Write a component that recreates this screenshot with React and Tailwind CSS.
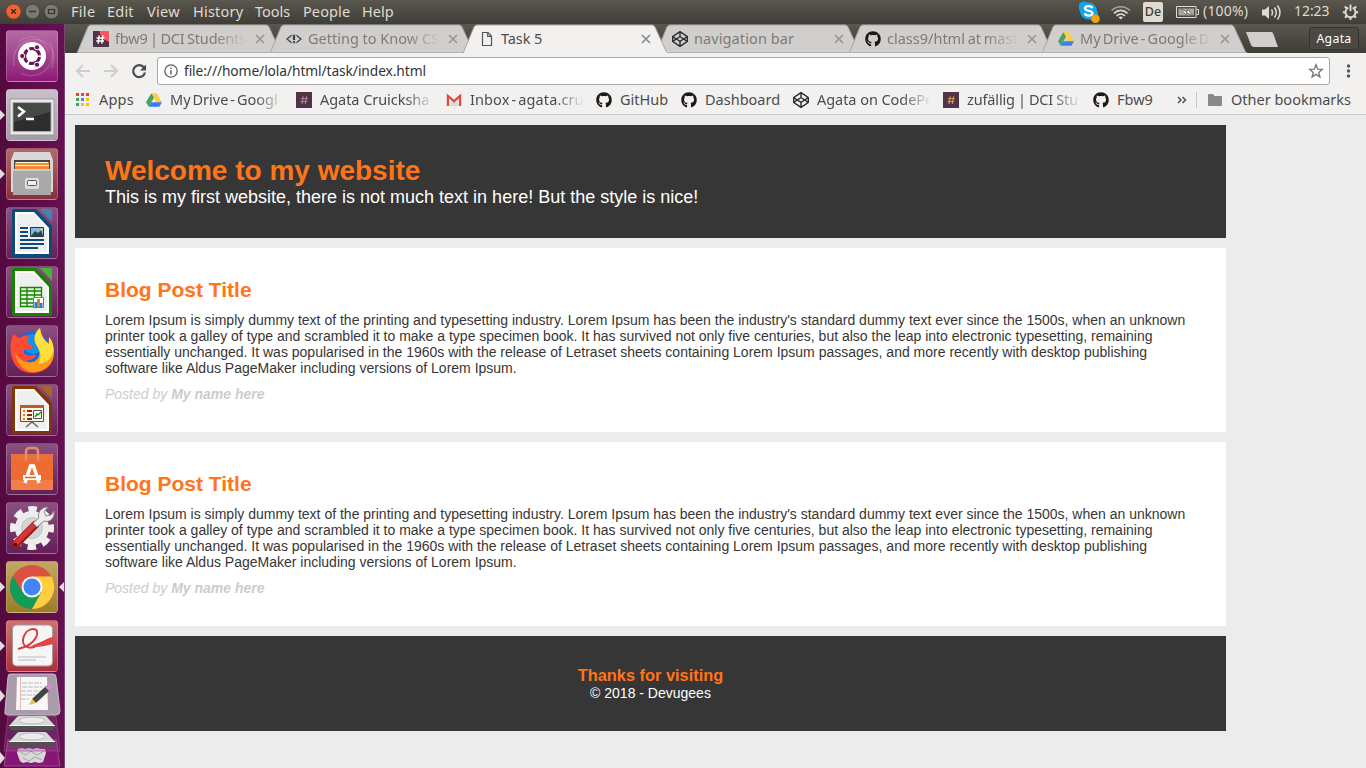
import React from "react";
import { FaGithub, FaCodepen } from "react-icons/fa";

const ui = "font-['Noto_Sans','Open_Sans',sans-serif] whitespace-nowrap";

/* ---------- favicons ---------- */
function Drive() {
  return (
    <svg width="16" height="16" viewBox="0 0 16 16" className="shrink-0">
      <path d="M5.3 1.2h5.4L16 10.3h-5.4z" fill="#ffcd40" />
      <path d="M5.3 1.2 0 10.3l2.7 4.5L8 5.8z" fill="#4aa35a" />
      <path d="M5.3 10.3H16l-2.7 4.5H2.7z" fill="#3c7df0" />
    </svg>
  );
}
function Hash({ gold }) {
  return (
    <svg width="16" height="16" viewBox="0 0 16 16" className="shrink-0">
      <path d="M0 0h16v16H0z" fill="#4f3448" />
      <path d="M7.3 4.2 6 12M10.6 4.2 9.3 12M4.9 6.7h7M4.3 9.6h7" stroke={gold ? "#d9a441" : "#a48b9e"} strokeWidth="1" fill="none" />
    </svg>
  );
}
function HashRed() {
  return (
    <svg width="16" height="16" viewBox="0 0 16 16" className="shrink-0">
      <path d="M0 0h16v16H0z" fill="#4f3448" />
      <path d="M6.5 0H16v10.5C11 10 7 5 6.5 0z" fill="#ff5560" />
      <path d="M6.2 4.4 5.2 12.6M9.8 4.4 8.8 12.6M3.6 7h7.8M3.2 10h7.8" stroke="#fff" strokeWidth="1.4" fill="none" />
    </svg>
  );
}
function Eye() {
  return (
    <svg width="16" height="16" viewBox="0 0 16 16" className="shrink-0" fill="none" stroke="#3b4045">
      <path d="M5.5 4.3 1 8l4.500 3.700M10.500 4.300 15 8l-4.500 3.700" strokeWidth="1.200" />
      <path d="M5.500 4.300Q8 2.800 10.500 4.300M5.500 11.700Q8 13.200 10.500 11.700" strokeWidth=".9" strokeOpacity=".35" />
      <path d="M8 4v5" strokeWidth="2.200" />
      <path d="M8 10v1.800" strokeWidth="2" />
    </svg>
  );
}
function Page() {
  return (
    <svg width="16" height="16" viewBox="0 0 16 16" className="shrink-0" fill="none" stroke="#555" strokeWidth="1.200">
      <path d="M3.500 1.500h5.500l3.500 3.500v9.500h-9zM8.700 1.500v3.800h3.800" />
    </svg>
  );
}
function Gmail() {
  return (
    <svg width="16" height="16" viewBox="0 0 16 16" className="shrink-0">
      <path d="M1 2.500h14V14H1z" fill="#f4f0ee" />
      <path d="m2 14 4-5 2 1.500L10 9l4 5z" fill="#dcd8d6" />
      <path d="M1.900 14V4L8 9.200 14.100 4v10" fill="none" stroke="#dd4b3e" strokeWidth="2.200" />
    </svg>
  );
}
const Github = () => <FaGithub size={16} color="#1b1817" className="shrink-0" />;
const Codepen = () => <FaCodepen size={16} color="#2b2b2b" className="shrink-0" />;
function AppsGrid() {
  const c = ["#ea4335", "#ea4335", "#ea4335", "#34a853", "#4285f4", "#fbbc05", "#34a853", "#fbbc05", "#fbbc05"];
  return (
    <svg width="13" height="16" viewBox="0 0 13 16" className="shrink-0">
      {c.map((f, i) => <rect key={i} x={(i % 3) * 5} y={1 + Math.floor(i / 3) * 5} width="3" height="3" fill={f} />)}
    </svg>
  );
}

/* ---------- top panel ---------- */
function MenuBar() {
  const items = [["File", "w-[36px] tracking-[0.300px]"], ["Edit", "w-[40px] tracking-[0.200px]"], ["View", "w-[46px] tracking-[0.300px]"], ["History", "w-[62px] tracking-[0.200px]"], ["Tools", "w-[48px]"], ["People", "w-[59px] tracking-[0.100px]"], ["Help", "w-[40px]"]];
  return (
    <div className={`flex h-6 items-center bg-linear-to-b from-[#5a574e] to-[#3e3d38] text-[#dfdbd2] ${ui}`}>
      <svg width="71" height="24" viewBox="0 0 71 24" className="shrink-0">
        <circle cx="13.500" cy="11.500" r="7.500" fill="#ee6233" stroke="#8f3b1c" strokeWidth=".8" />
        <path d="m11.200 9.200 4.600 4.600m0-4.600-4.600 4.600" stroke="#4a2013" strokeWidth="1.300" />
        <circle cx="32.500" cy="11.500" r="7.400" fill="#7a786f" stroke="#393833" strokeWidth=".8" />
        <path d="M29 11.500h7" stroke="#33322e" strokeWidth="1.300" />
        <circle cx="51.500" cy="11.500" r="7.400" fill="#7a786f" stroke="#393833" strokeWidth=".8" />
        <path d="M48.500 9.500h6v4h-6z" fill="none" stroke="#33322e" strokeWidth="1.200" />
      </svg>
      <div className="flex grow pb-[2px] text-[14.500px] leading-[22px]">
        {items.map(([t, c]) => <span key={t} className={c}>{t}</span>)}
      </div>
      <svg width="65" height="24" viewBox="1 0 65 24" className="shrink-0">
        <circle cx="6" cy="7" r="5.500" fill="#12a5e8" />
        <circle cx="14" cy="14" r="6" fill="#12a5e8" />
        <circle cx="10.500" cy="11" r="8.500" fill="#12a5e8" />
        <path d="M14.300 8.300c-.7-2.700-7.300-3.200-7.300 0 0 3.500 7.500 1.800 7.500 5 0 3.200-7 3-7.700 0" fill="none" stroke="#fff" strokeWidth="2.400" />
        <circle cx="17.500" cy="18.800" r="4.300" fill="#f5a110" />
        <g fill="none" stroke="#dfdbd2" strokeWidth="1.700">
          <path d="M33.600 10.500c5.300-5 13-5 18.300 0" opacity=".6" />
          <path d="M36 13.400c4-4 9.500-4 13.500 0" />
          <path d="M38.600 16c2.400-2.400 6-2.400 8.400 0" />
        </g>
        <path d="m40.500 17.200 2.300 2.300 2.300-2.300q-2.300-1.500-4.600 0z" fill="#dfdbd2" />
      </svg>
      <span className="-ml-px flex h-5 w-5 items-center justify-center rounded-xs bg-[#dfdbd2] text-[12.500px] font-medium text-[#3c3b37]">De</span>
      <svg width="25" height="24" viewBox="0 0 25 24" className="ml-3 shrink-0">
        <path d="M1.500 6.500h19.500v11H1.500zM21.500 9.500h2v5h-2" fill="none" stroke="#dfdbd2" />
        <path d="M3.500 8.500h15.500v7H3.500z" fill="#aaa79f" />
        <path d="m5.500 8.500 6.500 3.500.5-2.700 5.500 6.200-6.500-3-.5 2.400z" fill="#fff" stroke="#4d4b45" strokeWidth=".7" />
      </svg>
      <span className="ml-[3px] w-[58px] pb-[2px] text-[14px] leading-[22px] tracking-[0.200px]">(100%)</span>
      <svg width="22" height="24" viewBox="0 0 22 24" className="shrink-0">
        <path d="M1 9.500h3L8 6v13l-4-3.500H1z" fill="#dfdbd2" />
        <path d="M10.500 9.500q2 3 0 6M13.500 7.500q3.500 5 0 10M16.500 5.500q5 7 0 14" fill="none" stroke="#dfdbd2" strokeWidth="1.500" />
      </svg>
      <span className="ml-[11px] w-[48px] pb-[2px] text-[13.900px] leading-[22px]">12:23</span>
      <svg width="17" height="24" viewBox="0 0 17 24" className="mr-[7px] shrink-0" fill="none" stroke="#dfdbd2">
        <path d="M6.300 7.700a5 5 0 1 0 4.400 0" strokeWidth="1.900" />
        <path d="M8.500 4.500v6.500" strokeWidth="1.900" />
        <path d="m4.600 8.200-1.800-1.800M12.400 8.200l1.800-1.800M3.500 12.200H.8M13.500 12.200h2.700M5 15.800l-2 2M12 15.800l2 2M8.500 17v3" strokeWidth="2" />
      </svg>
    </div>
  );
}

/* ---------- launcher ---------- */
function Doc({ c, l }) {
  return (
    <g>
      <path d="M8 2h22l16 17v29q0 2-2 2H8q-2 0-2-2V4q0-2 2-2z" fill={c} />
      <path d="M9 5h19l15 16v26H9z" fill="#fff" />
      <path d="M11 7h16l14 15v23H11z" fill="#efefef" />
      <path d="M34 2h10q2 0 2 2v11z" fill={l} />
    </g>
  );
}
const arts = {
  ubuntu: (
    <g>
      <path d="M8 36C5 15 22 5 39 12q12 8 7 26" fill="none" stroke="#e0a5d2" strokeOpacity=".3" strokeWidth="1.500" />
      <path d="M44 12C55 33 33 53 15 43M13 12q18-14 30 10" fill="none" stroke="#e0a5d2" strokeOpacity=".25" strokeWidth="1.500" />
      <circle cx="26" cy="26" r="14" fill="#fff" />
      <circle cx="26" cy="26" r="7.500" fill="none" stroke="#6a1455" strokeWidth="3.200" strokeDasharray="13.700 2" strokeDashoffset="-1" />
      <circle cx="16.200" cy="26" r="2.600" fill="#6a1455" stroke="#fff" />
      <circle cx="31" cy="17.300" r="2.600" fill="#6a1455" stroke="#fff" />
      <circle cx="31" cy="34.700" r="2.600" fill="#6a1455" stroke="#fff" />
    </g>
  ),
  term: (
    <g>
      <path d="M4 10h44v36H4z" fill="#e9e9e9" stroke="#999" />
      <path d="M7 13.500h38v29H7z" fill="#2c2e2c" stroke="#aaa" />
      <path d="M8 14h36v9L8 33z" fill="#454845" />
      <path d="m12 18 6 4.500-6 5M20 30h8" fill="none" stroke="#fff" strokeWidth="2.500" />
    </g>
  ),
  files: (
    <g>
      <path d="M8 4h36l3 8v32H5V12z" fill="#d8d8d8" />
      <path d="M8 12h36v10H8z" fill="#444" />
      <path d="M9 14h34v8H9z" fill="#ef8b3d" />
      <path d="M9 17.500h34M10 14.500h32" stroke="#fff0d0" />
      <path d="M7 21h38v26H7z" fill="#a9a9a9" />
      <path d="M7 22h38" stroke="#ccc" strokeWidth="2" />
      <rect x="19" y="30" width="14" height="11" rx="2" fill="#ddd" />
      <rect x="21.500" y="32.500" width="9" height="5" rx="1" fill="#eee" stroke="#555" />
    </g>
  ),
  writer: (
    <g>
      <Doc c="#0c4b78" l="#3f86b5" />
      <path d="M14 21h8M14 25h8M14 29h8M14 33h24M14 37h24M14 41h18" stroke="#0c4b78" strokeWidth="2" />
      <path d="M24.500 20.500h13v9h-13z" fill="#80bce8" stroke="#113b5a" />
      <path d="m25 29 4-5 3 2 3-3 2 6z" fill="#384238" /><circle cx="35.500" cy="22.500" r="1.200" fill="#f2d13c" />
    </g>
  ),
  calc: (
    <g>
      <Doc c="#188303" l="#4bb13a" />
      <path d="M14 21h22v20H14z" fill="#e2f7dc" />
      <path d="M14.500 21.500h21v19h-21zM14 25h22M14 29h22M14 33h22M14 37h22M21 21v20M28.500 21v20" fill="none" stroke="#188303" strokeWidth="1.300" />
      <path d="M27.500 31.500h10v10h-10z" fill="#fff" stroke="#777" />
      <path d="M28.500 36h2.500v5h-2.500z" fill="#1784d8" /><path d="M31 33h3v8h-3z" fill="#e57a22" /><path d="M34 37h2.500v4H34z" fill="#1784d8" />
    </g>
  ),
  firefox: (
    <g>
      <circle cx="26" cy="25" r="18" fill="#1568e0" />
      <circle cx="27" cy="19" r="10" fill="#11b0f2" fillOpacity=".6" />
      <path d="M8 9C4 16 4 21 5 29c2 12 10 19 21 19 14 0 22-9 22-21 0-5-2-10-5-14l-3 20c-6 8-15 8-20 2 4 1 7-1 10-4-2-3-5 1-9-1-3-1-4-3-3-5 2-1 6 1 9-3-1-3-6-2-6-6 0-2 1-3 2-5-4-1-7 0-9 2-3-1-4-2-6-4z" fill="#ff4a35" />
      <path d="M34 3c-6 5-7 12-3 18 7 11-2 20-14 15-4-2-6-5-8-9 1 12 10 21 20 20 12-1 19-10 19-20 0-6-2-12-5-15v7c-5-4-8-8-9-16z" fill="#ff9a1b" />
      <path d="M34 3c-6 5-7 12-3 18 4 6 5 12 1 18 15-1 20-16 11-27v7c-5-4-8-8-9-16z" fill="#ffe03c" />
    </g>
  ),
  impress: (
    <g>
      <Doc c="#813704" l="#a9632f" />
      <path d="M14.500 21.500h23v16h-23z" fill="#fff3e8" stroke="#9a3c11" />
      <path d="M14 21h24v3H14z" fill="#c25a24" />
      <path d="M17 27h2M17 31h2M17 35h2" stroke="#e57a22" strokeWidth="2" />
      <path d="M21 27h5M21 31h5M21 35h5" stroke="#8b2e06" strokeWidth="2" />
      <path d="M27.500 26.500h8v8h-8z" fill="#fff" stroke="#555" /><path d="m29 33 2-3 1 1 3-3" stroke="#1b9c20" fill="none" strokeWidth="1.500" />
      <path d="m26 38-6 5m6-5 6 5" stroke="#666" strokeWidth="1.500" />
    </g>
  ),
  software: (
    <g>
      <path d="M5 11h42v36H5z" fill="#ee6c31" />
      <path d="M5 11h42v4H5z" fill="#e9713f" /><path d="M5 37h42v10H5z" fill="#f37d45" />
      <path d="M20 18V9q0-4 4-4h4q4 0 4 4v9" fill="none" stroke="#e58a6a" strokeWidth="2.500" />
      <path d="m19 40 5.500-17h3L33 40" fill="none" stroke="#fff" strokeWidth="3.500" />
      <path d="M17 34.500h18" stroke="#fff" strokeWidth="5" /><path d="M19 34.500h11" stroke="#e65a21" strokeWidth="1.500" />
    </g>
  ),
  settings: (
    <g>
      <circle cx="26" cy="26" r="19" fill="none" stroke="#efefef" strokeWidth="6" strokeDasharray="8.500 6.420" strokeDashoffset="4.250" />
      <circle cx="26" cy="26" r="13.500" fill="#e4e4e4" stroke="#ececec" strokeWidth="7" />
      <circle cx="26" cy="26" r="10.500" fill="#d4d4d4" stroke="#c4c4c4" />
      <path d="M10 42 29 23" stroke="#9d1818" strokeWidth="8" strokeLinecap="round" />
      <path d="M10 41 29 22" stroke="#d23835" strokeWidth="5" strokeLinecap="round" />
      <path d="m27 21 6-5c-2-5 2-11 9-11l-4 5 2 4 5-1 3-4c1 7-4 12-10 10l-7 6z" fill="#eee" stroke="#888" />
      <circle cx="9.500" cy="42.500" r="1.800" fill="#5a0d0d" />
    </g>
  ),
  chrome: (
    <g>
      <circle cx="26" cy="26" r="22" fill="#dd5144" />
      <path d="M7 15a22 22 0 0 0 19 33l9.500-17-9.500 5-9.500-5z" fill="#109d58" />
      <path d="M26 15.500h19.500A22 22 0 0 1 26 48l9.500-17z" fill="#ffcd40" />
      <circle cx="26" cy="26" r="10.500" fill="#f5f5f5" /><circle cx="26" cy="26" r="8.500" fill="#4285f4" />
    </g>
  ),
  reader: (
    <g>
      <rect x="6.500" y="5" width="40" height="41" rx="4" fill="#f6f6f6" stroke="#a59a9a" />
      <path d="M12 29C31 25 36 9 27 9 18 9 13 24 21 27c8 3 14-6 26-9" fill="none" stroke="#de3a3c" strokeWidth="2" />
      <path d="M25 26q10-5 22-7v5q-11 3-18 3z" fill="#e04547" />
      <path d="M12 37h28M12 40h18" stroke="#bbb" />
    </g>
  ),
};
const plum = "from-[#8a5080] to-[#641f57]";
const tiles = [
  ["ubuntu", "from-[#b46aa3] to-[#8d1776]", 0], ["term", "from-[#c9c0c9] to-[#a59aa5]", 1], ["files", "from-[#b0686a] to-[#8b2f3b]", 1],
  ["writer", plum, 0], ["calc", plum, 0], ["firefox", plum, 0],
  ["impress", plum, 0], ["software", plum, 0], ["settings", plum, 0],
  ["chrome", "from-[#c0a962] to-[#9c7c28]", 2], ["reader", "from-[#cf7070] to-[#ad2e3b]", 1],
];
function Disk({ y }) {
  return (
    <g transform={`translate(0 ${y})`}>
      <path d="m9 10 8-9q1-1 3-1h24q2 0 3 1l8 9v2H9z" fill="#d9d9d9" />
      <ellipse cx="32" cy="4.500" rx="13" ry="3.500" fill="#ececec" stroke="#bbb" />
      <path d="M9 9.500h46v2l-3 3H12l-3-3z" fill="#505050" />
      <path d="M9 9.500h46" stroke="#f4f4f4" />
    </g>
  );
}
function Launcher() {
  return (
    <div className="flex w-[65px] shrink-0 flex-col border-r border-[#7b4a72] bg-linear-to-r from-[#54093f] to-[#641152] pt-[6px]">
      {tiles.map(([k, c, m]) => (
        <div key={k} className="mb-[7px] flex h-[52px] shrink-0 items-center">
          <svg width="6" height="12" className="shrink-0">{m > 0 && <path d="M0 1v10l5-5z" fill="#e3dce2" />}</svg>
          <div className={`h-[52px] w-[52px] shrink-0 overflow-hidden rounded-[4px] border border-white/20 bg-linear-to-b ${c}`}>
            <svg width="50" height="50" viewBox="1 1 50 50">{arts[k]}</svg>
          </div>
          <svg width="6" height="12" className="shrink-0">{m === 2 && <path d="M6 1v10L1 6z" fill="#e3dce2" />}</svg>
        </div>
      ))}
      <svg width="64" height="96" viewBox="0 672 64 96" className="-mt-[7px] shrink-0">
        <path d="M8 740h48l4 26H4z" fill="#871776" stroke="#9e4a8e" />
        <path d="m18 749 4-1 3 1 4-1 4 1 4-1 4 1 4 0 1 4-3 9-4 1-4-1-4 1-4-1-4 1-3-2-3-8z" fill="#d8d8d8" />
        <path d="m20 752 6 3 5-4 6 4 7-4M23 758l6 3 6-4 7 3" stroke="#a5a5a5" fill="none" />
        <path d="M8 716h48l4 35H4z" fill="#96568a" fillOpacity=".3" stroke="#9e4a8e" strokeOpacity=".6" />
        <Disk y={732} />
        <Disk y={716} />
        <path d="M10 674h43q3 0 3 3l4 34q0 4-4 4H8q-4 0-3-4l3-34q0-3 2-3z" fill="#a99ba9" stroke="#c9bcc9" />
        <path d="M17 677h30l1 33H16z" fill="#f7f7f7" />
        <path d="M22 683h20M22 687h20M21 691h20M21 695h18M21 699h8" stroke="#bbb" strokeDasharray="5 1" />
        <path d="M20.500 677v33" stroke="#efb4b4" />
        <path d="m32 699 14-13 4 4-14 13z" fill="#444" /><path d="m45 687 4-4 4 4-4 4z" fill="#d78ac5" /><path d="m29 705 3-6 4 4z" fill="#e5c345" />
        <path d="M0 690v12l5-6zM0 752v12l5-6z" fill="#e3dce2" />
      </svg>
    </div>
  );
}

/* ---------- browser chrome ---------- */
function Tab({ icon, title, active, tw }) {
  const f = active ? "#f2f1f0" : "#d1cfcd";
  return (
    <div className={`relative -mr-[12px] flex h-[29px] w-[205px] shrink-0 items-center pl-[16px] ${active ? "z-10" : ""}`}>
      <svg width="205" height="29" className="absolute inset-0">
        <path d="M0 29 1 27 11 3q1-2 3-2h175q2 0 3 2l11 24 1 2z" fill={f} stroke="#aaa7a3" strokeWidth="1" />
        {active ? <path d="M1 28h203v1H1z" fill="#f2f1f0" /> : <path d="M0 28h205v1H0z" fill="#b3b1ae" />}
      </svg>
      <div className="relative flex items-center">
        {icon}
        <div className={`-mt-px ml-[6px] w-[132px] overflow-hidden text-[14.500px] leading-6 word-spacing-tight ${active ? "text-[#4c4c4c]" : "text-[#7d7b79]"} ${tw}`}>{title}</div>
        <svg width="10" height="10" className="ml-[8px]"><path d="m1 1 8 8m0-8-8 8" stroke={active ? "#888" : "#979593"} strokeWidth="1.600" /></svg>
      </div>
    </div>
  );
}
function TabStrip() {
  return (
    <div className={`flex h-[29px] items-start bg-linear-to-b from-[#5a574e] to-[#3e3d38] pl-[12px] ${ui}`}>
      <Tab icon={<HashRed />} title="fbw9 | DCI Students" tw="mask-r-from-75% tracking-[-0.200px] [word-spacing:-1px]" />
      <Tab icon={<Eye />} title="Getting to Know CS" tw="mask-r-from-75%" />
      <Tab icon={<Page />} title="Task 5" active tw="tracking-[-0.100px]" />
      <Tab icon={<Codepen />} title="navigation bar" tw="tracking-[0.100px]" />
      <Tab icon={<Github />} title="class9/html at mast" tw="mask-r-from-75% [word-spacing:-1px]" />
      <Tab icon={<Drive />} title="My Drive - Google D" tw="mask-r-from-75% tracking-[0.050px] [word-spacing:-1.800px]" />
      <svg width="34" height="16" viewBox="0 0 34 16" className="mt-[8px] ml-[10px] shrink-0"><path d="M1 0h25q1 0 2 1l5 14H9q-2 0-3-2z" fill="#d1cfcd" /></svg>
      <div className="mt-[3px] mr-[7px] ml-auto flex h-[23px] w-[50px] items-center justify-center rounded-[3px] border border-[#35342f] bg-[#4a4943] pt-px text-[12.300px] tracking-[0.300px] text-white">Agata</div>
    </div>
  );
}
function Toolbar() {
  return (
    <div className={`flex h-[35px] items-center bg-[#f2f1f0] ${ui}`}>
      <svg width="92" height="35" viewBox="65 53 92 35" className="shrink-0" fill="none" strokeWidth="2">
        <path d="M90 71H77m6-6-6 6 6 6M104 71h13m-6-6 6 6-6 6" stroke="#cfcecc" />
        <path d="M144 67.500a6 6 0 1 0 1 5" stroke="#4c4c4c" strokeWidth="2.200" />
        <path d="M146 64.500v6h-6z" fill="#4c4c4c" />
      </svg>
      <div className="flex h-[28px] w-[1173px] items-center rounded-[3px] border border-[#aaa8a6] bg-white pl-[6px]">
        <svg width="14" height="14" viewBox="0 0 14 14" fill="none" stroke="#5f5f5f"><circle cx="7" cy="7" r="6.200" strokeWidth="1.300" /><path d="M7 6.200v4.300M7 3.500v1.600" strokeWidth="1.500" /></svg>
        <span className="ml-[6px] pt-px text-[13.800px] tracking-[-0.100px] text-[#333]">file:///home/lola/html/task/index.html</span>
        <svg width="16" height="16" viewBox="0 0 16 16" className="mr-[5px] ml-auto" fill="none" stroke="#7a7a7a" strokeWidth="1.400"><path d="m8 1.800 1.700 4.300 4.600.3-3.500 3 1.100 4.500L8 11.400l-3.900 2.500 1.100-4.500-3.500-3 4.600-.3z" /></svg>
      </div>
      <svg width="36" height="20" viewBox="0 0 36 20" fill="#555"><circle cx="18.500" cy="5" r="1.700" /><circle cx="18.500" cy="10" r="1.700" /><circle cx="18.500" cy="15" r="1.700" /></svg>
    </div>
  );
}
function Bookmark({ icon, label, w, fade = "" }) {
  return (
    <div className={`flex shrink-0 items-center ${w}`}>
      {icon}
      <span className={`ml-2 overflow-hidden ${fade ? "w-[114px] mask-r-from-75%" : ""} ${fade}`}>{label}</span>
    </div>
  );
}
function Bookmarks() {
  return (
    <div className={`flex h-[27px] items-center border-b border-[#c9c8c7] bg-[#f2f1f0] pb-[3px] pl-[11px] text-[14.500px] leading-[23px] text-[#4c4c4c] ${ui}`}>
      <Bookmark icon={<AppsGrid />} label={<span className="ml-[2px] tracking-[0.200px]">Apps</span>} w="w-[70px]" />
      <Bookmark icon={<Drive />} label="My Drive - Googl" w="w-[150px]" fade="[word-spacing:-1.800px]" />
      <Bookmark icon={<Hash />} label="Agata Cruicksha" w="w-[150px]" fade="tracking-[-0.050px]" />
      <Bookmark icon={<Gmail />} label="Inbox - agata.cru" w="w-[150px]" fade="tracking-[0.100px] [word-spacing:-1.800px]" />
      <Bookmark icon={<Github />} label="GitHub" w="w-[85px]" />
      <Bookmark icon={<Github />} label="Dashboard" w="w-[112px]" />
      <Bookmark icon={<Codepen />} label="Agata on CodePe" w="w-[150px]" fade="tracking-[-0.050px]" />
      <Bookmark icon={<Hash gold />} label="zufällig | DCI Stu" w="w-[150px]" fade="tracking-[-0.150px] [word-spacing:-0.500px]" />
      <Bookmark icon={<Github />} label="Fbw9" w="w-[84px]" />
      <svg width="19" height="16" viewBox="0 0 19 16" fill="none" stroke="#555" strokeWidth="1.600"><path d="m1 5 3 3-3 3M5.500 5l3 3-3 3" /></svg>
      <div className="h-4 w-px bg-[#c9c8c7]" />
      <svg width="14" height="12" viewBox="0 0 14 12" className="ml-[11px] shrink-0"><path d="M0 1q0-1 1-1h4l1.500 2H13q1 0 1 1v8q0 1-1 1H1q-1 0-1-1z" fill="#8a8a8a" /></svg>
      <span className="ml-[9px]">Other bookmarks</span>
    </div>
  );
}

/* ---------- web page ---------- */
function Post() {
  return (
    <article className="mt-[10px] bg-white p-[30px]">
      <h2 className="text-[21px] leading-6 font-bold text-[#ff7518]">Blog Post Title</h2>
      <p className="my-[10px] text-[#363636]">
        Lorem Ipsum is simply dummy text of the printing and typesetting industry. Lorem Ipsum has been the industry's standard dummy text ever since the 1500s, when an unknown printer took a galley of type and scrambled it to make a type specimen book. It has survived not only five centuries, but also the leap into electronic typesetting, remaining essentially unchanged. It was popularised in the 1960s with the release of Letraset sheets containing Lorem Ipsum passages, and more recently with desktop publishing software like Aldus PageMaker including versions of Lorem Ipsum.
      </p>
      <p className="text-[#cccccc] italic">Posted by <strong>My name here</strong></p>
    </article>
  );
}
function Site() {
  return (
    <main className="grow bg-[#ececec] p-[10px] font-['Liberation_Sans',Arial,sans-serif] text-[14px] leading-4">
      <div className="w-[1151px]">
        <header className="bg-[#363636] p-[30px]">
          <h1 className="text-[28px] leading-8 font-bold text-[#ff7518]">Welcome to my website</h1>
          <p className="text-[18px] leading-[21px] text-white">This is my first website, there is not much text in here! But the style is nice!</p>
        </header>
        <Post />
        <Post />
        <footer className="mt-[10px] bg-[#363636] p-[30px] text-center">
          <h3 className="text-[16.380px] leading-[19px] font-bold text-[#ff7518]">Thanks for visiting</h3>
          <p className="text-white">© 2018 - Devugees</p>
        </footer>
      </div>
    </main>
  );
}

export default function App() {
  return (
    <div className="flex h-[768px] w-[1366px] flex-col overflow-hidden">
      <MenuBar />
      <div className="flex h-[744px]">
        <Launcher />
        <div className="flex w-[1301px] flex-col">
          <TabStrip />
          <Toolbar />
          <Bookmarks />
          <Site />
        </div>
      </div>
    </div>
  );
}
